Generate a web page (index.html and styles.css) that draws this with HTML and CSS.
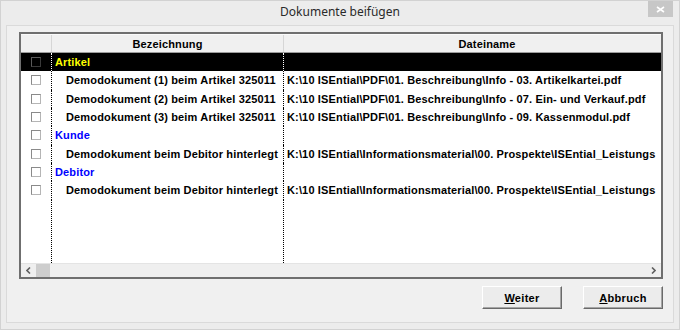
FILE: index.html
```html
<!DOCTYPE html>
<html lang="de">
<head>
  <meta charset="UTF-8">
  <title>Dokumente beifügen</title>
  <link rel="stylesheet" href="styles.css">
</head>
<body>
  <div class="window">
    <div class="titlebar">
      <span></span>
      <span class="title">Dokumente beifügen</span>
      <span class="close">
        <svg width="9" height="7" viewBox="0 0 9 7"><path d="M1 1L8 6M8 1L1 6" stroke="#fff" stroke-width="1.6" fill="none"/></svg>
      </span>
    </div>
    <div class="client">
      <div class="list">
        <div class="row head">
          <div class="cell"></div>
          <div class="cell">Bezeichnung</div>
          <div class="cell">Dateiname</div>
        </div>
        <div class="rows">
          <div class="row selected">
            <div class="cell chk"><span class="box"></span></div>
            <div class="cell group artikel">Artikel</div>
            <div class="cell file"></div>
          </div>
          <div class="row">
            <div class="cell chk"><span class="box"></span></div>
            <div class="cell doc">Demodokument (1) beim Artikel 325011</div>
            <div class="cell file">K:\10 ISEntial\PDF\01. Beschreibung\Info - 03. Artikelkartei.pdf</div>
          </div>
          <div class="row">
            <div class="cell chk"><span class="box"></span></div>
            <div class="cell doc">Demodokument (2) beim Artikel 325011</div>
            <div class="cell file">K:\10 ISEntial\PDF\01. Beschreibung\Info - 07. Ein- und Verkauf.pdf</div>
          </div>
          <div class="row">
            <div class="cell chk"><span class="box"></span></div>
            <div class="cell doc">Demodokument (3) beim Artikel 325011</div>
            <div class="cell file">K:\10 ISEntial\PDF\01. Beschreibung\Info - 09. Kassenmodul.pdf</div>
          </div>
          <div class="row">
            <div class="cell chk"><span class="box"></span></div>
            <div class="cell group">Kunde</div>
            <div class="cell file"></div>
          </div>
          <div class="row">
            <div class="cell chk"><span class="box"></span></div>
            <div class="cell doc">Demodokument beim Debitor hinterlegt</div>
            <div class="cell file">K:\10 ISEntial\Informationsmaterial\00. Prospekte\ISEntial_Leistungs</div>
          </div>
          <div class="row">
            <div class="cell chk"><span class="box"></span></div>
            <div class="cell group">Debitor</div>
            <div class="cell file"></div>
          </div>
          <div class="row">
            <div class="cell chk"><span class="box"></span></div>
            <div class="cell doc">Demodokument beim Debitor hinterlegt</div>
            <div class="cell file">K:\10 ISEntial\Informationsmaterial\00. Prospekte\ISEntial_Leistungs</div>
          </div>
          <div class="row filler">
            <div class="cell"></div>
            <div class="cell"></div>
            <div class="cell"></div>
          </div>
        </div>
        <div class="hscroll">
          <span class="arrow"><svg width="5" height="7" viewBox="0 0 5 7"><path d="M4 0.5L1 3.5L4 6.5" stroke="#606060" stroke-width="1.6" fill="none"/></svg></span>
          <span class="thumb"></span>
          <span class="track"></span>
          <span class="arrow"><svg width="5" height="7" viewBox="0 0 5 7"><path d="M1 0.5L4 3.5L1 6.5" stroke="#606060" stroke-width="1.6" fill="none"/></svg></span>
        </div>
      </div>
      <div class="buttons">
        <button class="btn"><u>W</u>eiter</button>
        <button class="btn"><u>A</u>bbruch</button>
      </div>
    </div>
  </div>
</body>
</html>
```

FILE: styles.css
```css
* {
  margin: 0;
  padding: 0;
  box-sizing: border-box;
}
body {
  background-color: #fff;
  font-family: "Liberation Sans", Arial, sans-serif;
}
.window {
  width: 680px;
  height: 330px;
  display: flex;
  flex-direction: column;
  background-color: #ececec;
  border: 1px solid #d2d2d2;
}
.titlebar {
  height: 24px;
  display: grid;
  grid-template-columns: 1fr auto 1fr;
  align-items: start;
}
.titlebar .title {
  font-family: "Noto Sans", sans-serif;
  font-size: 12px;
  line-height: 22px;
  color: #2a2a2a;
}
.titlebar .close {
  justify-self: end;
  width: 25px;
  height: 16px;
  margin-right: 6px;
  background-color: #c7c7c7;
  display: flex;
  align-items: center;
  justify-content: center;
}
.client {
  flex: 1;
  margin: 0 5px 6px 5px;
  border: 1px solid #dadada;
  background-color: #f0f0f0;
  padding: 6px 10px 13px 12px;
  display: flex;
  flex-direction: column;
}
.list {
  height: 247px;
  border: 2px solid #6f6f6f;
  background-color: #fff;
  display: flex;
  flex-direction: column;
  overflow: hidden;
}
.row {
  display: grid;
  grid-template-columns: 31px 232px 406px;
  height: 18.33px;
  font-size: 11px;
  font-weight: bold;
  letter-spacing: 0.15px;
  white-space: nowrap;
  color: #000;
}
.row .cell {
  border-right: 1px dotted #000;
  display: flex;
  align-items: center;
  overflow: hidden;
}
.row .cell:last-child {
  border-right: none;
}
.head {
  height: 19px;
  background-color: #f0f0f0;
  border-top: 1px solid #fafafa;
  border-bottom: 1px solid #9c9c9c;
}
.head .cell {
  border-right: 1px solid #d6d6d6;
  justify-content: center;
}
.rows {
  flex: 1;
  display: flex;
  flex-direction: column;
}
.filler {
  flex: 1;
}
.selected {
  background-color: #000;
}
.selected .cell {
  border-right-color: #fff;
}
.chk {
  justify-content: center;
}
.box {
  width: 10px;
  height: 10px;
  border: 1px solid;
  border-color: #8a8a8a #b5b5b5 #b5b5b5 #8a8a8a;
  background-color: #fff;
}
.selected .box {
  border-color: #5a5a5a #3a3a3a #3a3a3a #5a5a5a;
  background-color: #000;
}
.group {
  padding-left: 3px;
  color: #0000ff;
}
.group.artikel {
  color: #ffff00;
}
.doc {
  padding-left: 14px;
}
.file {
  padding-left: 3px;
}
.hscroll {
  height: 14px;
  display: flex;
  background-color: #efefef;
  border-top: 1px solid #e4e4e4;
}
.hscroll .arrow {
  width: 15px;
  display: flex;
  align-items: center;
  justify-content: center;
}
.hscroll .thumb {
  width: 14px;
  background-color: #cdcdcd;
}
.hscroll .track {
  flex: 1;
}
.buttons {
  margin-top: 7px;
  display: flex;
  justify-content: flex-end;
  gap: 21px;
}
.btn {
  width: 80px;
  height: 23px;
  font-family: "Liberation Sans", Arial, sans-serif;
  font-size: 11px;
  font-weight: bold;
  letter-spacing: 0.3px;
  color: #000;
  background-color: #ececec;
  border: 1px solid;
  border-color: #fff #6a6a6a #6a6a6a #fff;
  box-shadow: inset -1px -1px 0 #a5a5a5;
}
```
